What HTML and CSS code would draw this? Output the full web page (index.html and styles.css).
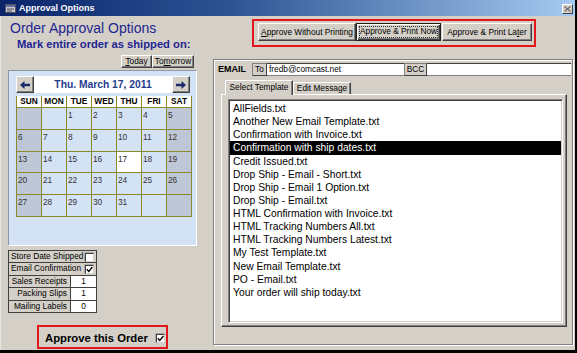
FILE: index.html
```html
<!DOCTYPE html>
<html>
<head>
<meta charset="utf-8">
<link rel="stylesheet" href="styles.css">
</head>
<body>
<div class="window">
  <div class="titlebar">
    <svg class="app-icon" width="11" height="9" viewBox="0 0 11 9"><rect x="0.5" y="0.5" width="10" height="8" fill="#c8c8d0" stroke="#505060"/><rect x="1" y="1" width="9" height="2" fill="#6070a0"/><line x1="2" y1="5" x2="9" y2="5" stroke="#505060"/><line x1="2" y1="7" x2="7" y2="7" stroke="#505060"/></svg>
    <span class="title">Approval Options</span>
    <span class="close"><svg width="7" height="6" viewBox="0 0 7 6"><path d="M0.5 0.5 L6.5 5.5 M6.5 0.5 L0.5 5.5" stroke="#707070" stroke-width="1.2"/></svg></span>
  </div>
  <div class="client">
    <div class="left">
      <h1 class="heading">Order Approval Options</h1>
      <div class="subheading">Mark entire order as shipped on:</div>
      <div class="quick-btns">
        <button class="btn btn-today"><u>T</u>oday</button><button class="btn btn-tomorrow">To<u>m</u>orrow</button>
      </div>
      <div class="calendar">
        <div class="cal-head">
          <button class="arrow"><svg width="10" height="8" viewBox="0 0 10 8"><path d="M0 4 L4.5 0 L4.5 2.8 L10 2.8 L10 5.2 L4.5 5.2 L4.5 8 Z" fill="#1b2a6b"/></svg></button>
          <div class="cal-date">Thu. March 17, 2011</div>
          <button class="arrow"><svg width="10" height="8" viewBox="0 0 10 8"><path d="M10 4 L5.5 0 L5.5 2.8 L0 2.8 L0 5.2 L5.5 5.2 L5.5 8 Z" fill="#1b2a6b"/></svg></button>
        </div>
        <div class="cal-grid">
          <div class="dow">SUN</div><div class="dow">MON</div><div class="dow">TUE</div><div class="dow">WED</div><div class="dow">THU</div><div class="dow">FRI</div><div class="dow">SAT</div>
          <div class="day we"></div><div class="day"></div><div class="day">1</div><div class="day">2</div><div class="day">3</div><div class="day">4</div><div class="day we">5</div>
          <div class="day we">6</div><div class="day">7</div><div class="day">8</div><div class="day">9</div><div class="day">10</div><div class="day">11</div><div class="day we">12</div>
          <div class="day we">13</div><div class="day">14</div><div class="day">15</div><div class="day">16</div><div class="day today">17</div><div class="day">18</div><div class="day we">19</div>
          <div class="day we">20</div><div class="day">21</div><div class="day">22</div><div class="day">23</div><div class="day">24</div><div class="day">25</div><div class="day we">26</div>
          <div class="day we">27</div><div class="day">28</div><div class="day">29</div><div class="day">30</div><div class="day">31</div><div class="day"></div><div class="day we"></div>
        </div>
      </div>
      <div class="opts">
        <div class="opt-row"><span class="opt-label">Store Date Shipped</span><span class="chk"></span></div>
        <div class="opt-row"><span class="opt-label">Email Confirmation</span><span class="chk"><svg width="7" height="7" viewBox="0 0 7 7"><path d="M0.8 3.2 L2.8 5.4 L6.4 1" stroke="#000" stroke-width="1.3" fill="none"/></svg></span></div>
        <div class="opt-row num"><span class="opt-label">Sales Receipts</span><span class="opt-val">1</span></div>
        <div class="opt-row num"><span class="opt-label">Packing Slips</span><span class="opt-val">1</span></div>
        <div class="opt-row num"><span class="opt-label">Mailing Labels</span><span class="opt-val">0</span></div>
      </div>
      <div class="approve">Approve this Order <span class="chk chk-approve"><svg width="7" height="7" viewBox="0 0 7 7"><path d="M0.8 3.2 L2.8 5.4 L6.4 1" stroke="#000" stroke-width="1.3" fill="none"/></svg></span></div>
    </div>
    <div class="right">
      <div class="actions">
        <button class="btn act act-1"><u>A</u>pprove Without Printing</button>
        <button class="btn act act-2 default"><span class="focus">Approve &amp; Print Now</span></button>
        <button class="btn act act-3">Approve &amp; Print La<u>t</u>er</button>
      </div>
      <div class="frame">
        <div class="email-row">
          <span class="email-label">EMAIL</span>
          <span class="field-tag tag-to">To</span>
          <span class="field field-to">fredb@comcast.net</span>
          <span class="field-tag tag-bcc">BCC</span>
          <span class="field field-bcc"></span>
        </div>
        <div class="tabs">
          <span class="tab active">Select Template</span>
          <span class="tab">Edit Message</span>
        </div>
        <div class="tab-panel">
          <div class="list">
            <div class="item">AllFields.txt</div>
            <div class="item">Another New Email Template.txt</div>
            <div class="item">Confirmation with Invoice.txt</div>
            <div class="item selected">Confirmation with ship dates.txt</div>
            <div class="item">Credit Issued.txt</div>
            <div class="item">Drop Ship - Email - Short.txt</div>
            <div class="item">Drop Ship - Email 1 Option.txt</div>
            <div class="item">Drop Ship - Email.txt</div>
            <div class="item">HTML Confirmation with Invoice.txt</div>
            <div class="item">HTML Tracking Numbers All.txt</div>
            <div class="item">HTML Tracking Numbers Latest.txt</div>
            <div class="item">My Test Template.txt</div>
            <div class="item">New Email Template.txt</div>
            <div class="item">PO - Email.txt</div>
            <div class="item">Your order will ship today.txt</div>
          </div>
        </div>
      </div>
    </div>
  </div>
</div>
</body>
</html>
```

FILE: styles.css
```css
* { box-sizing: border-box; }
html, body { margin: 0; padding: 0; }
body {
  width: 577px;
  height: 353px;
  background: #000;
  font-family: "Liberation Sans", Arial, sans-serif;
  font-size: 8.3px;
  color: #000;
  overflow: hidden;
}
.window {
  width: 575px;
  height: 350px;
  background: #d4d0c8;
  display: flex;
  flex-direction: column;
  box-shadow: inset 1px 0 0 #e6e4de;
}

/* title bar */
.titlebar {
  position: relative;
  flex: none;
  height: 16px;
  display: flex;
  align-items: center;
  padding-left: 5px;
  background: linear-gradient(90deg, #0a246a 0%, #2d5494 40%, #a6caf0 100%);
}
.app-icon { display: block; margin-right: 3px; }
.title {
  color: #fff;
  font-weight: bold;
  font-size: 9px;
  line-height: 16px;
}
.close {
  position: absolute;
  right: 2px;
  top: 4px;
  width: 11px;
  height: 10px;
  background: #d4d0c8;
  border: 1px solid;
  border-color: #fff #404040 #404040 #fff;
  display: flex;
  align-items: center;
  justify-content: center;
}
.close svg { display: block; }

.client {
  flex: 1;
  display: flex;
}

/* left column */
.left {
  flex: none;
  width: 213px;
  padding-left: 8px;
}
.heading {
  margin: 4px 0 0 2px;
  font-size: 14px;
  line-height: 16px;
  font-weight: normal;
  color: #1f2690;
}
.subheading {
  margin-top: 2px;
  padding-left: 9px;
  font-size: 11.2px;
  line-height: 13px;
  font-weight: bold;
  color: #1f2690;
}
.quick-btns {
  display: flex;
  justify-content: flex-end;
  width: 186px;
  height: 13px;
  margin-top: 4px;
}
.btn {
  font-family: "Liberation Sans", Arial, sans-serif;
  font-size: 8.3px;
  color: #000;
  background: #d4d0c8;
  border: 1px solid;
  border-color: #fff #404040 #404040 #fff;
  box-shadow: inset -1px -1px 0 #808080;
  padding: 0;
  margin: 0;
  line-height: 1;
  white-space: nowrap;
}
.btn-today { width: 31px; height: 13px; }
.btn-tomorrow { width: 42px; height: 13px; }

.calendar {
  margin-top: 2px;
  width: 189px;
  height: 176px;
  background: #d4e2f6;
  border: 1px solid;
  border-color: #9098a4 #ffffff #ffffff #9098a4;
  padding: 5px 0 0 7px;
}
.cal-head {
  display: flex;
  height: 17px;
  width: 174px;
}
.arrow {
  width: 18px;
  height: 17px;
  padding: 0;
  background: #d4d0c8;
  border: 1px solid;
  border-color: #fff #404040 #404040 #fff;
  box-shadow: inset -1px -1px 0 #808080;
  display: flex;
  align-items: center;
  justify-content: center;
}
.arrow svg { display: block; }
.cal-date {
  flex: 1;
  background: #fff;
  text-align: center;
  font-size: 10.3px;
  font-weight: bold;
  line-height: 17px;
  color: #1f3b8e;
}
.cal-grid {
  margin-top: 3px;
  display: grid;
  grid-template-columns: repeat(7, 25px);
  width: 176px;
  border-left: 1px solid #8a8a2a;
}
.dow {
  height: 12px;
  background: #fff;
  border-right: 1px solid #8a8a2a;
  border-bottom: 1px solid #8a8a2a;
  font-weight: bold;
  font-size: 8.3px;
  line-height: 11px;
  text-align: center;
}
.day {
  height: 21.8px;
  background: #d4e2f6;
  border-right: 1px solid #8a8a2a;
  border-bottom: 1px solid #8a8a2a;
  font-size: 8.3px;
  line-height: 10px;
  padding: 2px 0 0 1px;
  color: #333;
}
.day.we { background: #bec7d5; }
.day.today { background: #fff; }

/* options */
.opts {
  margin-top: 4px;
  width: 89px;
  border: 1px solid #404040;
  background: #d4d0c8;
}
.opt-row {
  display: flex;
  align-items: stretch;
  height: 12.4px;
  border-bottom: 1px solid #404040;
}
.opt-row:last-child { border-bottom: none; height: 11.4px; }
.opt-label {
  flex: 1;
  padding-left: 2px;
  line-height: 11.4px;
  white-space: nowrap;
}
.opt-row .chk { margin: 1.5px 2px 0 0; }
.opt-row.num .opt-label {
  text-align: right;
  padding-right: 3px;
}
.opt-val {
  width: 26px;
  background: #fff;
  border-left: 1px solid #404040;
  text-align: center;
  line-height: 11.4px;
}
.chk {
  display: inline-flex;
  align-items: center;
  justify-content: center;
  width: 9px;
  height: 9px;
  background: #fff;
  border: 1px solid;
  border-color: #404040 #d4d0c8 #d4d0c8 #404040;
  box-shadow: -0.5px -0.5px 0 #808080;
  flex: none;
}
.chk svg { display: block; }

.approve {
  margin: 12px 0 0 29px;
  width: 131px;
  height: 24px;
  border: 2px solid #e3161b;
  display: flex;
  align-items: center;
  padding: 3px 0 0 6px;
  font-size: 11.3px;
  font-weight: bold;
  white-space: pre;
}
.chk-approve { margin-left: 5px; }

/* right column */
.right {
  flex: 1;
}
.actions {
  margin: 3px 0 0 39px;
  width: 284px;
  height: 28px;
  border: 2px solid #e3161b;
  display: flex;
  padding: 2px 0 0 4px;
}
.act { height: 17.5px; }
.act-1 { width: 98px; }
.act-2 { width: 85px; }
.act-3 { width: 90px; margin-left: 1px; }
.default {
  border: 1px solid #202020;
  box-shadow: inset 1px 1px 0 #fff, inset -1px -1px 0 #404040, inset -2px -2px 0 #808080;
  padding: 3px;
}
.focus {
  display: block;
  height: 100%;
  outline: 1px dotted #333;
  line-height: 9.5px;
}

.frame {
  margin-top: 12px;
  width: 360px;
  height: 286px;
  border: 1px solid #808080;
  box-shadow: inset 1px 1px 0 #fff, 1px 1px 0 #fff;
  padding: 3px 0 0 4px;
}
.email-row {
  display: flex;
  height: 12.5px;
}
.email-label {
  width: 34px;
  font-size: 9px;
  font-weight: bold;
  line-height: 12.5px;
}
.field-tag {
  border: 1px solid;
  border-color: #808080 #404040 #404040 #808080;
  background: #d4d0c8;
  text-align: center;
  line-height: 10.5px;
}
.tag-to { width: 15px; }
.tag-bcc { width: 23px; }
.field {
  background: #fff;
  border-top: 1px solid #404040;
  border-bottom: 1px solid #808080;
  line-height: 10.5px;
  padding-left: 2px;
}
.field-to { width: 137px; }
.field-bcc { flex: 1; margin-right: 1px; }

.tabs {
  display: flex;
  align-items: flex-end;
  margin: 4px 0 0 7px;
  height: 14.5px;
  position: relative;
  z-index: 1;
}
.tab {
  height: 12px;
  background: #d4d0c8;
  border: 1px solid;
  border-bottom: none;
  border-color: #fff #404040 transparent #fff;
  box-shadow: inset -1px 0 0 #808080;
  text-align: center;
  line-height: 11px;
  width: 58px;
}
.tab.active {
  width: 68px;
  height: 15.5px;
  margin-bottom: -1px;
  line-height: 13px;
}
.tab-panel {
  margin-left: 3px;
  width: 346px;
  height: 233px;
  border: 1px solid;
  border-color: #fff #404040 #404040 #fff;
  box-shadow: inset -1px -1px 0 #808080;
  padding: 4px 3px 3px 6px;
}
.list {
  width: 100%;
  height: 100%;
  background: #fff;
  border: 1px solid;
  border-color: #808080 #fff #fff #808080;
  box-shadow: inset 1px 1px 0 #404040, inset -1px -1px 0 #d4d0c8;
  padding: 2px 1px 0 1px;
}
.item {
  height: 13.14px;
  line-height: 13.14px;
  font-size: 10.3px;
  padding-left: 3px;
  white-space: nowrap;
}
.item.selected {
  background: #000;
  color: #fff;
}
```
